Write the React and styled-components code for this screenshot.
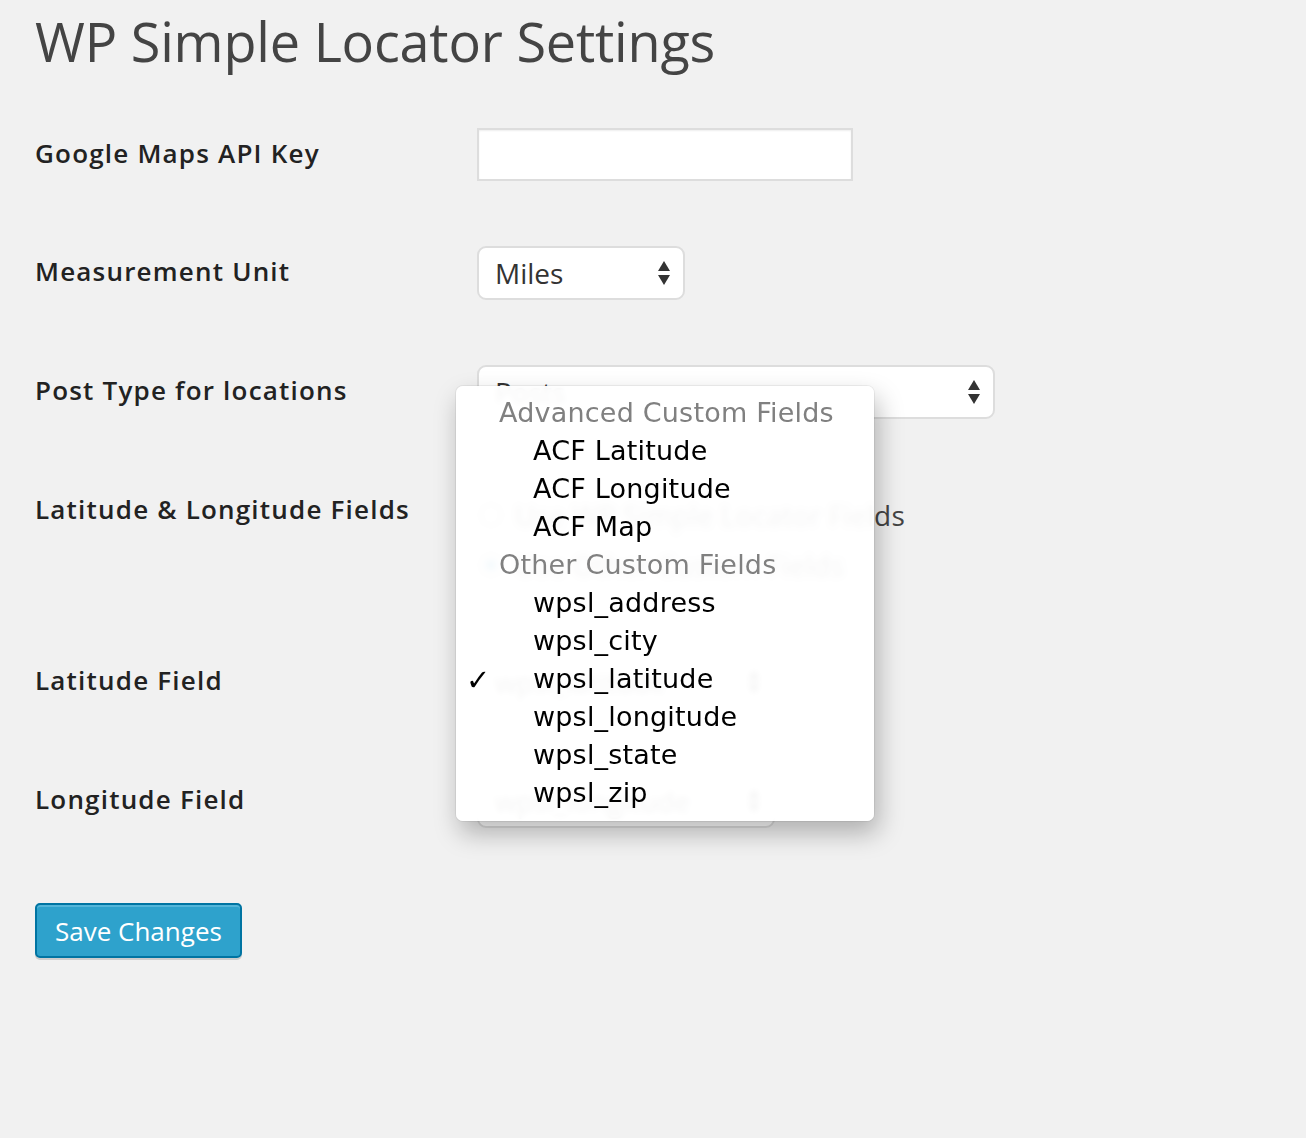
import React from 'react';
import styled, { createGlobalStyle } from 'styled-components';

const GlobalStyle = createGlobalStyle`
  html, body {
    margin: 0;
    padding: 0;
    background: #f1f1f1;
  }
  body {
    font-family: "Open Sans", "Liberation Sans", sans-serif;
    color: #444;
  }
`;

const Page = styled.div`
  min-height: 1138px;
  padding: 9px 0 0 35px;
  box-sizing: border-box;
`;

const Title = styled.h1`
  margin: 0 0 55px;
  font-size: 54px;
  line-height: 64px;
  font-weight: 400;
  color: #444;
  letter-spacing: -0.2px;
`;

const Form = styled.div`
  display: flex;
  flex-direction: column;
  gap: 65px;
`;

const Row = styled.div`
  display: grid;
  grid-template-columns: 442px 1fr;
  align-items: ${p => (p.$top ? 'start' : 'center')};
`;

const Label = styled.div`
  font-size: 26px;
  font-weight: 600;
  letter-spacing: 1.2px;
  color: #222;
  line-height: ${p => (p.$top ? '50px' : '34px')};
  margin-top: ${p => (p.$top ? '0' : '-4px')};
`;

const Field = styled.div`
  position: relative;
`;

const TextInput = styled.div`
  width: 376px;
  height: 53px;
  box-sizing: border-box;
  background: #fff;
  border: 2px solid #ddd;
  box-shadow: inset 0 1px 2px rgba(0, 0, 0, 0.07);
`;

const Select = styled.div`
  width: ${p => p.$w}px;
  height: 54px;
  box-sizing: border-box;
  background: #fff;
  border: 2px solid #ddd;
  border-radius: 9px;
  display: flex;
  align-items: center;
  justify-content: space-between;
  padding: 0 12px 0 16px;
  font-size: 28px;
  color: #333;
`;

const Arrows = () => (
  <svg width="14" height="26" viewBox="0 0 14 26">
    <path d="M7 1 L13 11 L1 11 Z" fill="#333" />
    <path d="M1 15 L13 15 L7 25 Z" fill="#333" />
  </svg>
);

const RadioGroup = styled.div`
  padding-top: 6px;
`;

const RadioLine = styled.div`
  height: 50px;
  display: flex;
  align-items: center;
  gap: 14px;
  padding-left: 4px;
  font-size: 28px;
  letter-spacing: 0.25px;
  color: #444;
`;

const Radio = styled.span`
  width: 20px;
  height: 20px;
  border-radius: 50%;
  box-sizing: border-box;
  border: 2px solid #bbb;
  background: #fff;
  display: inline-flex;
  align-items: center;
  justify-content: center;
  &::after {
    content: '';
    width: 10px;
    height: 10px;
    border-radius: 50%;
    background: ${p => (p.$checked ? '#1e8cbe' : 'transparent')};
  }
`;

const Menu = styled.div`
  position: absolute;
  left: -21px;
  top: 21px;
  width: 418px;
  padding: 8px 0 9px;
  background: rgba(255, 255, 255, 0.95);
  backdrop-filter: blur(3px);
  border-radius: 7px;
  box-shadow: 0 0 0 1px rgba(0, 0, 0, 0.06), 4px 12px 26px rgba(0, 0, 0, 0.28);
  z-index: 10;
  font-family: "DejaVu Sans", "Liberation Sans", sans-serif;
  font-size: 27px;
  letter-spacing: 0.2px;
`;

const MenuItem = styled.div`
  position: relative;
  height: 38px;
  line-height: 38px;
  padding-left: ${p => (p.$group ? '43px' : '77px')};
  color: ${p => (p.$group ? '#808080' : '#000')};
  white-space: nowrap;
`;

const Check = styled.span`
  position: absolute;
  left: 10px;
  top: 1px;
  font-size: 29px;
  font-weight: 700;
`;

const SaveButton = styled.button`
  margin-top: 10px;
  align-self: flex-start;
  height: 55px;
  padding: 0 18px;
  background: #2ea2cc;
  border: 2px solid #0074a2;
  border-radius: 5px;
  box-shadow: inset 0 2px 0 rgba(120, 200, 230, 0.5), 0 2px 0 rgba(0, 0, 0, 0.15);
  color: #fff;
  font-family: "Open Sans", "Liberation Sans", sans-serif;
  font-size: 26px;
  cursor: pointer;
`;

const menuItems = [
  { text: 'Advanced Custom Fields', group: true },
  { text: 'ACF Latitude' },
  { text: 'ACF Longitude' },
  { text: 'ACF Map' },
  { text: 'Other Custom Fields', group: true },
  { text: 'wpsl_address' },
  { text: 'wpsl_city' },
  { text: 'wpsl_latitude', checked: true },
  { text: 'wpsl_longitude' },
  { text: 'wpsl_state' },
  { text: 'wpsl_zip' },
];

export default function App() {
  return (
    <Page>
      <GlobalStyle />
      <Title>WP Simple Locator Settings</Title>
      <Form>
        <Row>
          <Label>Google Maps API Key</Label>
          <Field>
            <TextInput />
          </Field>
        </Row>
        <Row>
          <Label>Measurement Unit</Label>
          <Field>
            <Select $w={208}>
              <span>Miles</span>
              <Arrows />
            </Select>
          </Field>
        </Row>
        <Row>
          <Label>Post Type for locations</Label>
          <Field>
            <Select $w={518}>
              <span>Posts</span>
              <Arrows />
            </Select>
            <Menu>
              {menuItems.map(item => (
                <MenuItem key={item.text} $group={item.group}>
                  {item.checked && <Check>✓</Check>}
                  {item.text}
                </MenuItem>
              ))}
            </Menu>
          </Field>
        </Row>
        <Row $top>
          <Label $top>Latitude &amp; Longitude Fields</Label>
          <RadioGroup>
            <RadioLine>
              <Radio />
              Use WP Simple Locator Fields
            </RadioLine>
            <RadioLine>
              <Radio $checked />
              Use Other Custom Fields
            </RadioLine>
          </RadioGroup>
        </Row>
        <Row>
          <Label>Latitude Field</Label>
          <Field>
            <Select $w={298}>
              <span>wpsl_latitude</span>
              <Arrows />
            </Select>
          </Field>
        </Row>
        <Row>
          <Label>Longitude Field</Label>
          <Field>
            <Select $w={298}>
              <span>wpsl_longitude</span>
              <Arrows />
            </Select>
          </Field>
        </Row>
        <SaveButton>Save Changes</SaveButton>
      </Form>
    </Page>
  );
}
